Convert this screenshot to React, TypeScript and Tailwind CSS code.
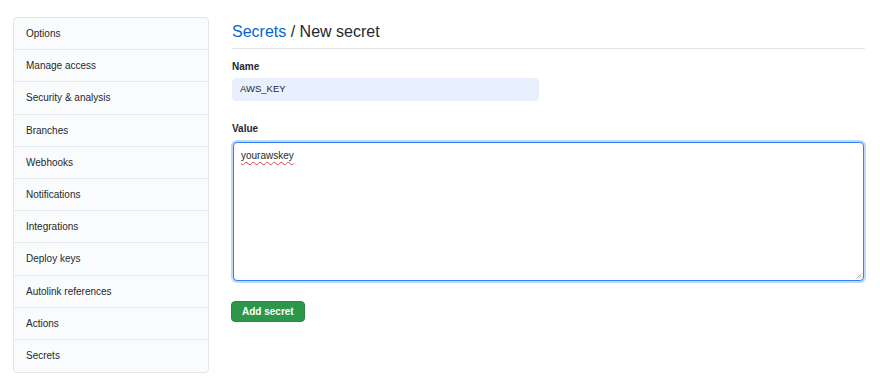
const menuItems = [
  'Options',
  'Manage access',
  'Security & analysis',
  'Branches',
  'Webhooks',
  'Notifications',
  'Integrations',
  'Deploy keys',
  'Autolink references',
  'Actions',
  'Secrets',
];

const font = "font-['Liberation_Sans',Arial,sans-serif]";

export default function App() {
  return (
    <div className={`${font} w-[880px] h-[387px] bg-white text-[#24292e] flex pl-[13px] pr-[15px] pt-[17px] gap-[23px]`}>
      {/* Sidebar */}
      <nav className="w-[196px] self-start border border-[#e1e4e8] rounded-[4px] bg-[#fafbfc] overflow-hidden">
        {menuItems.map((item, i) => (
          <div
            key={item}
            className={`h-[32.2px] flex items-center pl-[12px] text-[10px] text-[#24292e] ${
              i < menuItems.length - 1 ? 'border-b border-[#e8eaed]' : ''
            }`}
          >
            {item}
          </div>
        ))}
      </nav>

      {/* Main */}
      <main className="flex-1 pt-[3px]">
        <div className="pb-[4px] border-b border-[#e1e4e8]">
          <h2 className="text-[16px] leading-[24px] font-normal">
            <span className="text-[#0366d6]">Secrets</span> / New secret
          </h2>
        </div>

        <label className="block mt-[11px] text-[10px] leading-[14px] font-bold">Name</label>
        <div className="mt-[4px] w-[307px] h-[23px] rounded-[4px] bg-[#e8f0fe] flex items-center pl-[8px] text-[9.5px] text-[#24292e]">
          AWS_KEY
        </div>

        <label className="block mt-[21px] text-[10px] leading-[14px] font-bold">Value</label>
        <div className="relative mt-[6px] mx-[1px] h-[139px] border border-[#2f81f7] rounded-[4px] bg-white shadow-[0_0_0_2px_rgba(3,102,214,0.25)] pl-[7px] pt-[6px] text-[10px] leading-[14px]">
          <span className="underline decoration-wavy decoration-[#e0443e] decoration-[1px] underline-offset-[2px]">
            yourawskey
          </span>
          <svg className="absolute right-[1px] bottom-[1px]" width="7" height="7" viewBox="0 0 7 7">
            <path d="M6.5 1.5 L1.5 6.5 M6.5 4 L4 6.5" stroke="#9a9a9a" strokeWidth="0.8" />
          </svg>
        </div>

        <button className="mt-[20px] -ml-[1px] h-[21px] px-[10px] rounded-[4px] bg-[#2c974b] border border-[#288a44] text-white text-[10px] font-bold flex items-center">
          Add secret
        </button>
      </main>
    </div>
  );
}
